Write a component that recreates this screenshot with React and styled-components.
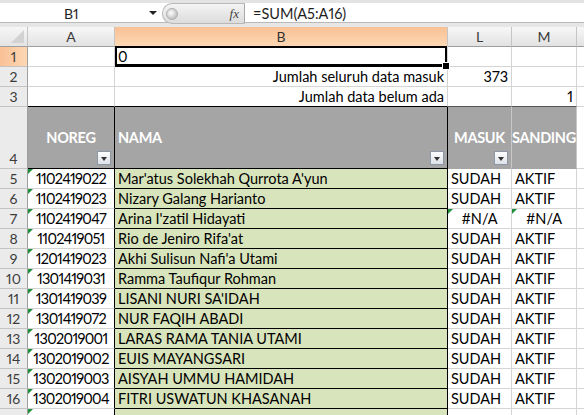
import React from 'react'
import styled, { createGlobalStyle, css } from 'styled-components'

const GlobalStyle = createGlobalStyle`
  html, body {
    margin: 0;
    padding: 0;
    background: #ffffff;
    overflow: hidden;
  }
  * {
    box-sizing: border-box;
  }
`

const FONT = `"Lato", "Liberation Sans", sans-serif`
const GRID = '#d4d4d4'
const HEAD_LINE = '#c4c4c4'

const rows = [
  ['1102419022', "Mar'atus Solekhah Qurrota A'yun", 'SUDAH', 'AKTIF'],
  ['1102419023', 'Nizary Galang Harianto', 'SUDAH', 'AKTIF'],
  ['1102419047', "Arina I'zatil Hidayati", '#N/A', '#N/A'],
  ['1102419051', "Rio de Jeniro Rifa'at", 'SUDAH', 'AKTIF'],
  ['1201419023', "Akhi Sulisun Nafi'a Utami", 'SUDAH', 'AKTIF'],
  ['1301419031', 'Ramma Taufiqur Rohman', 'SUDAH', 'AKTIF'],
  ['1301419039', "LISANI NURI SA'IDAH", 'SUDAH', 'AKTIF'],
  ['1301419072', 'NUR FAQIH ABADI', 'SUDAH', 'AKTIF'],
  ['1302019001', 'LARAS RAMA TANIA UTAMI', 'SUDAH', 'AKTIF'],
  ['1302019002', 'EUIS MAYANGSARI', 'SUDAH', 'AKTIF'],
  ['1302019003', 'AISYAH UMMU HAMIDAH', 'SUDAH', 'AKTIF'],
  ['1302019004', 'FITRI USWATUN KHASANAH', 'SUDAH', 'AKTIF'],
  ['', '', '', '']
]

const Window = styled.div`
  width: 584px;
  height: 415px;
  overflow: hidden;
  font-family: ${FONT};
  font-variant-numeric: proportional-nums;
  display: flex;
  flex-direction: column;
`

const FormulaBar = styled.div`
  height: 27px;
  flex: none;
  display: flex;
  background: #ffffff;
  border-top: 3px solid #e3e3e3;
  border-bottom: 4px solid #e6e6e6;
  box-shadow: inset 0 -1px 0 #b9b9b9;
`

const NameBox = styled.div`
  width: 162px;
  display: flex;
  align-items: center;
  font-size: 14px;
  color: #1e1e1e;
  padding-left: 64px;
  position: relative;
`

const DropArrow = styled.span`
  position: absolute;
  right: 5px;
  top: 8px;
  width: 0;
  height: 0;
  border-left: 4px solid transparent;
  border-right: 4px solid transparent;
  border-top: 4px solid #222;
`

const Pill = styled.div`
  width: 83px;
  display: flex;
  align-items: center;
  justify-content: space-between;
  padding: 0 5px 0 3px;
  border-radius: 10px 0 0 10px;
  background: linear-gradient(#f4f4f4, #dcdcdc);
  border: 1px solid #b8b8b8;
  border-right: 1px solid #a8a8a8;
  margin-bottom: -1px;
`

const Knob = styled.span`
  width: 12px;
  height: 12px;
  border-radius: 50%;
  background: radial-gradient(circle at 40% 40%, #ffffff, #c2c2c2 70%);
  border: 1px solid #b0b0b0;
`

const Fx = styled.span`
  font-family: "Liberation Serif", serif;
  font-style: italic;
  font-size: 13px;
  color: #444;
`

const FormulaInput = styled.div`
  flex: 1;
  display: flex;
  align-items: center;
  padding-left: 8px;
  font-size: 14.5px;
  color: #1e1e1e;
`

const Sheet = styled.div`
  flex: 1;
  display: grid;
  grid-template-columns: 28px 87px 333px 64px 65px 1fr;
  grid-template-rows: 20px 20px 20px 20px 62px repeat(13, 20px);
  font-size: 14.5px;
  color: #000;
`

const Corner = styled.div`
  background: linear-gradient(#f6f6f6, #e4e4e4);
  border-right: 1px solid ${HEAD_LINE};
  border-bottom: 1px solid #9f9f9f;
  position: relative;
  &::after {
    content: '';
    position: absolute;
    right: 3px;
    bottom: 3px;
    border-left: 13px solid transparent;
    border-bottom: 13px solid #d2d2d2;
  }
`

const ColHead = styled.div`
  display: flex;
  align-items: center;
  justify-content: center;
  font-size: 14px;
  color: #3b3b3b;
  border-right: 1px solid ${HEAD_LINE};
  border-bottom: 1px solid #9f9f9f;
  background: linear-gradient(#f7f7f7, #e2e2e2);
  ${p => p.$active && css`
    background: linear-gradient(#f9c095, #fdd8b4);
    border-bottom-color: #e59a5e;
    color: #333;
  `}
`

const RowHead = styled.div`
  display: flex;
  justify-content: center;
  align-items: ${p => (p.$tall ? 'flex-end' : 'center')};
  padding-bottom: ${p => (p.$tall ? '1px' : '0')};
  font-size: 14px;
  color: #3b3b3b;
  background: #ebebeb;
  border-right: 1px solid #9f9f9f;
  border-bottom: 1px solid ${HEAD_LINE};
  ${p => p.$active && css`
    background: linear-gradient(90deg, #f9c095, #fdd8b4);
  `}
`

const Cell = styled.div`
  position: relative;
  display: flex;
  align-items: center;
  justify-content: ${p => p.$align || 'flex-start'};
  padding: 0 3px 0 3px;
  white-space: nowrap;
  overflow: visible;
  letter-spacing: ${p => (p.$tight ? '-0.7px' : 'normal')};
  background: ${p => p.$fill || '#ffffff'};
  border-right: 1px solid ${p => p.$edgeR || GRID};
  border-bottom: 1px solid ${p => p.$edgeB || GRID};
  ${p => p.$flag && css`
    &::before {
      content: '';
      position: absolute;
      left: 0;
      top: 0;
      border-top: 5px solid #1f8f3a;
      border-right: 5px solid transparent;
    }
  `}
  ${p => p.$selected && css`
    box-shadow: inset 0 0 0 2px #000;
    border-bottom-color: #000;
    margin-top: -1px;
    &::after {
      content: '';
      position: absolute;
      right: -3px;
      bottom: -4px;
      width: 6px;
      height: 6px;
      background: #000;
      border: 1px solid #fff;
      z-index: 2;
    }
  `}
`

const HeadCell = styled(Cell)`
  background: #a5a5a5;
  color: #ffffff;
  font-weight: 700;
  letter-spacing: -0.3px;
  border-bottom-color: ${p => p.$edgeB || '#000'};
`

const FilterButton = styled.span`
  position: absolute;
  right: 3px;
  bottom: 3px;
  width: 14px;
  height: 14px;
  border: 1px solid #8c96a4;
  background: linear-gradient(#fdfdfd, #dde3ea);
  display: flex;
  align-items: center;
  justify-content: center;
  &::after {
    content: '';
    border-left: 3.5px solid transparent;
    border-right: 3.5px solid transparent;
    border-top: 4px solid #333;
    margin-top: 1px;
  }
`

const Filler = styled.div`
  border-bottom: 1px solid ${GRID};
  background: #fff;
`

const FillerHead = styled.div`
  background: linear-gradient(#f7f7f7, #e2e2e2);
  border-bottom: 1px solid #9f9f9f;
`

export default function App() {
  return (
    <Window>
      <GlobalStyle />
      <FormulaBar>
        <NameBox>
          B1
          <DropArrow />
        </NameBox>
        <Pill>
          <Knob />
          <Fx>fx</Fx>
        </Pill>
        <FormulaInput>=SUM(A5:A16)</FormulaInput>
      </FormulaBar>

      <Sheet>
        <Corner />
        <ColHead>A</ColHead>
        <ColHead $active>B</ColHead>
        <ColHead>L</ColHead>
        <ColHead>M</ColHead>
        <FillerHead />

        <RowHead $active>1</RowHead>
        <Cell />
        <Cell $selected>0</Cell>
        <Cell />
        <Cell />
        <Filler />

        <RowHead>2</RowHead>
        <Cell />
        <Cell $align="flex-end">Jumlah seluruh data masuk</Cell>
        <Cell $align="flex-end">373</Cell>
        <Cell />
        <Filler />

        <RowHead>3</RowHead>
        <Cell $edgeB="#000" />
        <Cell $align="flex-end" $edgeB="#000">Jumlah data belum ada</Cell>
        <Cell $edgeB="#555" />
        <Cell $align="flex-end" $edgeB="#555">1</Cell>
        <Filler />

        <RowHead $tall>4</RowHead>
        <HeadCell $align="center" $edgeR="#000">
          NOREG
          <FilterButton />
        </HeadCell>
        <HeadCell $edgeR="#000">
          NAMA
          <FilterButton />
        </HeadCell>
        <HeadCell $align="center" $edgeR="#c8c8c8" $edgeB="#a5a5a5">
          MASUK
          <FilterButton />
        </HeadCell>
        <HeadCell $align="center" $edgeR="#c8c8c8" $edgeB="#a5a5a5">
          SANDING
        </HeadCell>
        <Filler />

        {rows.map((r, i) => {
          const na = r[2] === '#N/A'
          return (
            <React.Fragment key={i}>
              <RowHead>{i < 12 ? i + 5 : ''}</RowHead>
              <Cell $align="center" $flag $tight $edgeR="#000">{r[0]}</Cell>
              <Cell $fill="#d8e4bc" $edgeR="#000" $edgeB="#000">{r[1]}</Cell>
              <Cell $align={na ? 'center' : 'flex-start'} $flag={na}>{r[2]}</Cell>
              <Cell $align={na ? 'center' : 'flex-start'} $flag={na}>{r[3]}</Cell>
              <Filler />
            </React.Fragment>
          )
        })}
      </Sheet>
    </Window>
  )
}
